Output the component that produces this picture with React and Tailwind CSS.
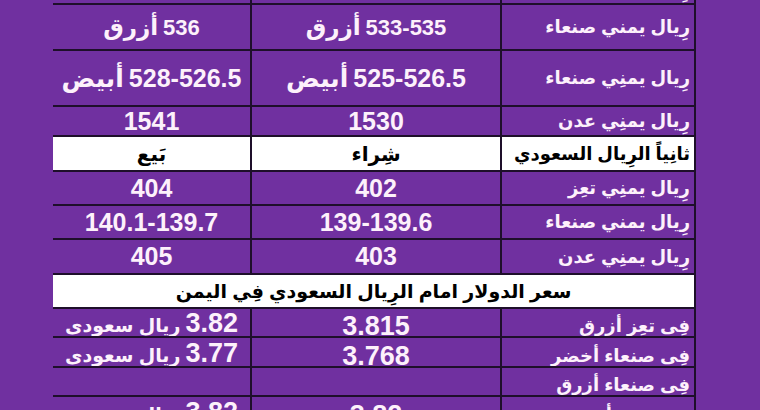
import React from 'react';

const font = { fontFamily: '"Liberation Sans", "DejaVu Sans", Arial, sans-serif' };

// number + arabic word pair, arabic on the left, number on the right (rtl order)
function Pair({ n, a, ns = 'text-[25px]', as = 'text-[25px]' }) {
  return (
    <span dir="rtl" className="flex items-baseline gap-[5px]">
      <span className={ns}>{n}</span>
      <span className={as}>{a}</span>
    </span>
  );
}

function Row({ h, white, left, mid, right, size = 'text-[25px]', rightSize = 'text-[18px]', align = 'items-center', lead = 'leading-none' }) {
  const txt = white ? 'text-black' : 'text-[#fdf1fb]';
  return (
    <div
      className={`grid grid-cols-[197px_250px_196px] border-b-2 border-[#1e0f2a] ${white ? 'bg-white' : ''}`}
      style={{ height: h }}
    >
      <div dir="rtl" className={`flex ${align} justify-center font-bold whitespace-nowrap overflow-hidden ${lead} ${size} ${txt}`}>
        {left}
      </div>
      <div dir="rtl" className={`flex ${align} justify-center border-l-2 border-[#1e0f2a] font-bold whitespace-nowrap overflow-hidden ${lead} ${size} ${txt}`}>
        {mid}
      </div>
      <div dir="rtl" className={`flex ${align} justify-start pr-1 border-x-2 border-[#1e0f2a] font-bold whitespace-nowrap overflow-hidden ${lead} ${rightSize} ${txt}`}>
        {right}
      </div>
    </div>
  );
}

export default function App() {
  return (
    <div className="w-[760px] h-[410px] overflow-hidden bg-[#7030a0]" style={font}>
      <div className="ml-[53px] w-[643px] -mt-[26px]">
        {/* أولاً — الدولار */}
        <Row h={31} left="1541" mid="1530" right="رِيال يمنِي تعِز" />
        <Row
          h={46}
          left={<Pair n="536" a="أزرق" ns="text-[22px]" as="text-[23px]" />}
          mid={<Pair n="533-535" a="أزرق" ns="text-[22px]" as="text-[23px]" />}
          right="رِيال يمني صنعاء"
        />
        <Row
          h={56}
          left={<Pair n="528-526.5" a="أبيض" />}
          mid={<Pair n="525-526.5" a="أبيض" />}
          right="رِيال يمنِي صنعاء"
        />
        <Row h={30} left="1541" mid="1530" right="رِيال يمنِي عدن" />

        {/* ثانياً — الريال السعودي */}
        <Row h={35} white left="بَيع" mid="شِراء" right="ثانِياً الرِيال السعودي" size="text-[20px]" rightSize="text-[18px]" />
        <Row h={34} left="404" mid="402" right="رِيال يمنِي تعِز" />
        <Row h={34} left="140.1-139.7" mid="139-139.6" right="رِيال يمني صنعاء" />
        <Row h={35} left="405" mid="403" right="رِيال يمنِي عدن" />

        {/* سعر الدولار امام الريال السعودي */}
        <div className="h-[34px] w-[643px] bg-white border-b-2 border-r-2 border-[#1e0f2a] flex items-center justify-center">
          <span dir="rtl" className="text-black font-bold text-[19px] leading-none">
            سعر الدولار امام الرِيال السعودي فِي اليمن
          </span>
        </div>
        <Row
          h={29}
          align="items-end"
          lead="leading-[20px]"
          size="text-[27px]"
          left={<Pair n="3.82" a="رِيال سعودى" ns="text-[27px]" as="text-[19px]" />}
          mid="3.815"
          right="فِى تعِز أزرق"
        />
        <Row
          h={30}
          align="items-end"
          lead="leading-[20px]"
          size="text-[27px]"
          left={<Pair n="3.77" a="رِيال سعودى" ns="text-[27px]" as="text-[19px]" />}
          mid="3.768"
          right="فِى صنعاء أخضر"
        />
        <Row h={29} align="items-end" lead="leading-[20px]" left="" mid="" right="فِى صنعاء أزرق" />
        <Row
          h={30}
          align="items-end"
          lead="leading-[20px]"
          size="text-[27px]"
          left={<Pair n="3.82" a="رِيال سعودى" ns="text-[27px]" as="text-[19px]" />}
          mid="3.82"
          right="فِى عدن أزرق"
        />
      </div>
    </div>
  );
}
